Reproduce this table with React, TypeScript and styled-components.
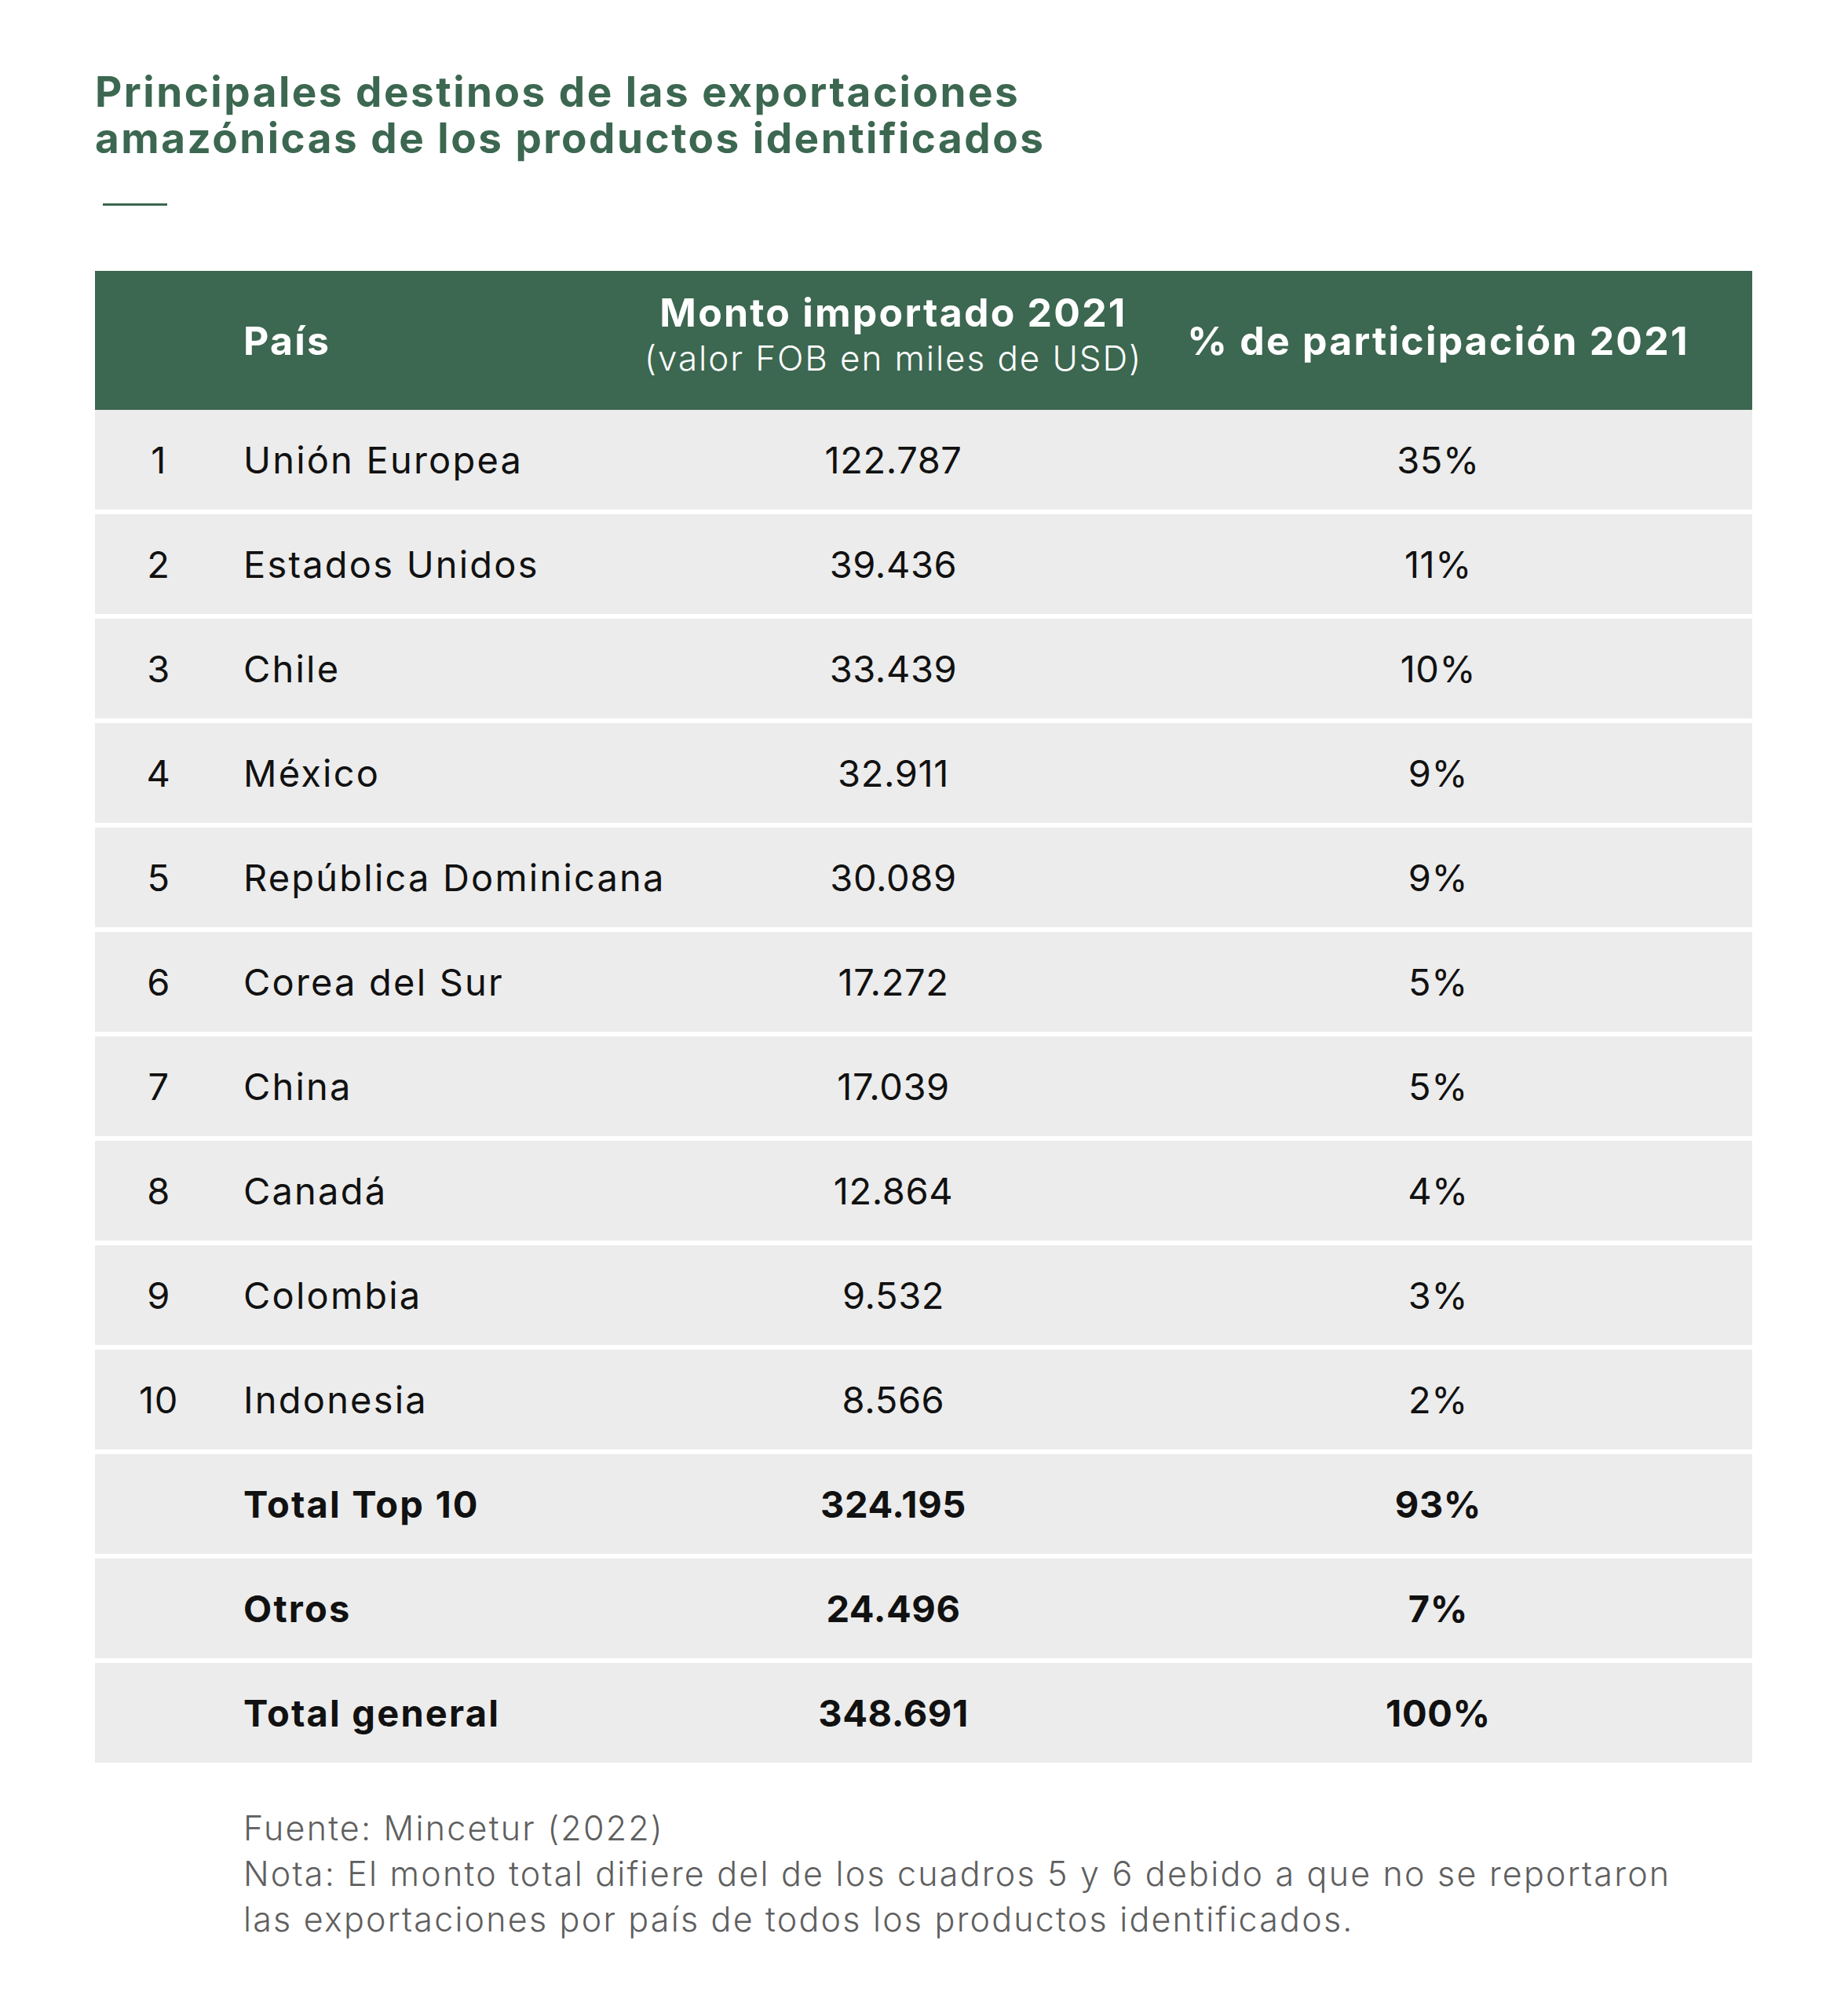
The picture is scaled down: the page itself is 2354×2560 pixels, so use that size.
import React from "react";
import styled, { createGlobalStyle } from "styled-components";

const Global = createGlobalStyle`
  html, body { margin: 0; padding: 0; background: #ffffff; }
  body { font-family: Inter, "Noto Sans", sans-serif; }
`;

const GREEN = "#3c6750";

const Page = styled.div`
  width: 2354px;
  min-height: 2560px;
  box-sizing: border-box;
  padding: 88px 122px 0 121px;
  background: #fff;
`;

const Title = styled.h1`
  margin: 0;
  font-family: Inter, sans-serif;
  font-weight: 700;
  font-size: 53px;
  line-height: 59px;
  color: ${GREEN};
  letter-spacing: 2.5px;
`;

const Rule = styled.div`
  width: 82px;
  height: 3px;
  background: ${GREEN};
  margin: 53px 0 0 10px;
`;

const Table = styled.div`
  margin-top: 83px;
  width: 2111px;
  display: flex;
  flex-direction: column;
  gap: 6px;
`;

const cols = "162px 561px 588px 800px";

const HeaderRow = styled.div`
  display: grid;
  grid-template-columns: ${cols};
  height: 177px;
  background: ${GREEN};
  color: #fff;
  align-items: center;
  margin-bottom: -6px;
`;

const HeadCell = styled.div<{ $align?: "left" | "center"; $lift?: boolean }>`
  display: flex;
  flex-direction: column;
  align-items: ${(p) => (p.$align === "left" ? "flex-start" : "center")};
  padding-left: ${(p) => (p.$align === "left" ? "27px" : "0")};
  padding-bottom: ${(p) => (p.$lift ? "14px" : "0")};
  font-weight: 700;
  font-size: 50px;
  line-height: 58px;
  letter-spacing: 2.2px;
  white-space: nowrap;
`;

const SubHead = styled.div`
  font-weight: 300;
  font-size: 44px;
  line-height: 58px;
  letter-spacing: 1.9px;
`;

const Row = styled.div`
  display: grid;
  grid-template-columns: ${cols};
  height: 127px;
  background: #ececec;
  align-items: center;
  color: #111;
`;

const Cell = styled.div<{ $align?: "left" | "center"; $bold?: boolean; $text?: boolean }>`
  text-align: ${(p) => p.$align ?? "center"};
  padding-left: ${(p) => (p.$align === "left" ? "27px" : "0")};
  font-weight: ${(p) => (p.$bold ? 700 : 400)};
  font-size: 47px;
  letter-spacing: ${(p) => (p.$text ? "2.2px" : "0.6px")};
  white-space: nowrap;
`;

const Footer = styled.div`
  margin: 54px 0 0 189px;
  font-weight: 300;
  font-size: 43px;
  line-height: 58px;
  letter-spacing: 2.2px;
  color: #5f5f5f;
`;

const data: [string, string, string][] = [
  ["Unión Europea", "122.787", "35%"],
  ["Estados Unidos", "39.436", "11%"],
  ["Chile", "33.439", "10%"],
  ["México", "32.911", "9%"],
  ["República Dominicana", "30.089", "9%"],
  ["Corea del Sur", "17.272", "5%"],
  ["China", "17.039", "5%"],
  ["Canadá", "12.864", "4%"],
  ["Colombia", "9.532", "3%"],
  ["Indonesia", "8.566", "2%"],
];

const totals: [string, string, string][] = [
  ["Total Top 10", "324.195", "93%"],
  ["Otros", "24.496", "7%"],
  ["Total general", "348.691", "100%"],
];

export default function App() {
  return (
    <Page>
      <Global />
      <Title>
        Principales destinos de las exportaciones
        <br />
        amazónicas de los productos identificados
      </Title>
      <Rule />
      <Table>
        <HeaderRow>
          <HeadCell />
          <HeadCell $align="left">País</HeadCell>
          <HeadCell $lift>
            <span>Monto importado 2021</span>
            <SubHead>(valor FOB en miles de USD)</SubHead>
          </HeadCell>
          <HeadCell>% de participación 2021</HeadCell>
        </HeaderRow>
        {data.map(([c, m, p], i) => (
          <Row key={c}>
            <Cell>{i + 1}</Cell>
            <Cell $align="left" $text>{c}</Cell>
            <Cell>{m}</Cell>
            <Cell>{p}</Cell>
          </Row>
        ))}
        {totals.map(([c, m, p]) => (
          <Row key={c}>
            <Cell />
            <Cell $align="left" $bold $text>{c}</Cell>
            <Cell $bold>{m}</Cell>
            <Cell $bold>{p}</Cell>
          </Row>
        ))}
      </Table>
      <Footer>
        Fuente: Mincetur (2022)
        <br />
        Nota: El monto total difiere del de los cuadros 5 y 6 debido a que no se reportaron
        <br />
        las exportaciones por país de todos los productos identificados.
      </Footer>
    </Page>
  );
}
